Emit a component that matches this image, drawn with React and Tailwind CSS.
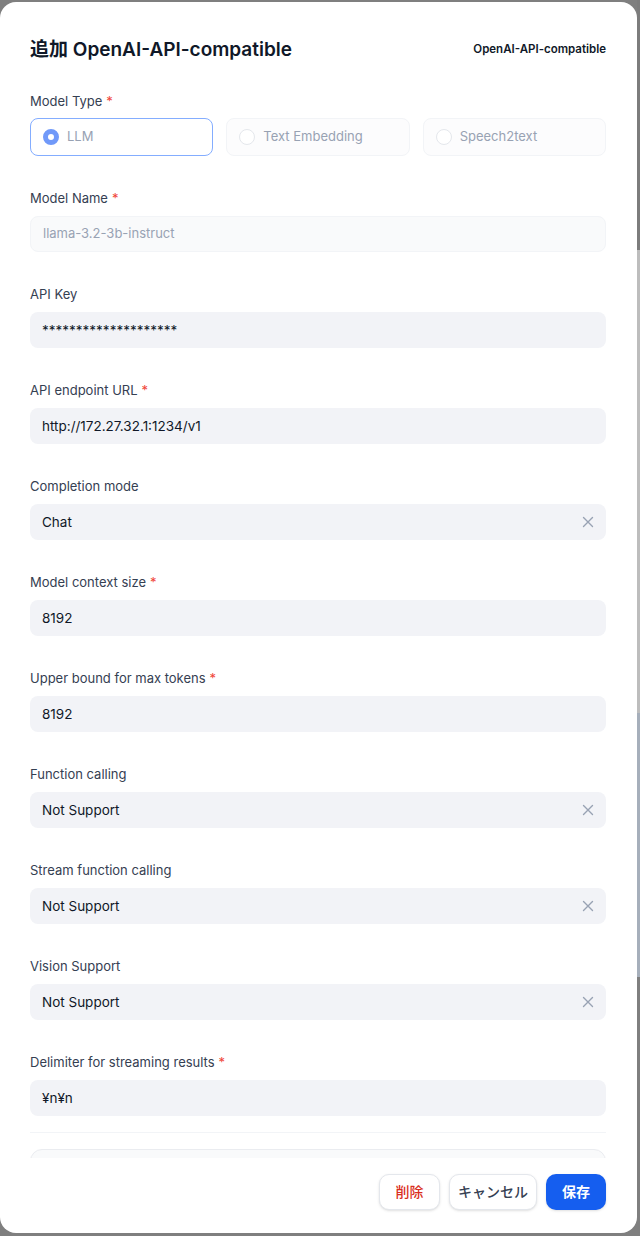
import React from "react";

const font = { fontFamily: 'Inter, "Noto Sans CJK JP", sans-serif' };

function Label({ text, required }) {
  return (
    <div className="h-5 text-[13px] leading-5 text-[#354052] flex items-center">
      <span>{text}</span>
      {required && <span className="ml-1 text-[#f04438]">*</span>}
    </div>
  );
}

function XIcon() {
  return (
    <svg width="12" height="12" viewBox="0 0 12 12" fill="none">
      <path d="M1.5 1.5L10.5 10.5M10.5 1.5L1.5 10.5" stroke="#98a2b3" strokeWidth="1.4" strokeLinecap="round" />
    </svg>
  );
}

function Field({ label, required, value, clear, disabled }) {
  return (
    <div className="flex flex-col gap-2">
      <Label text={label} required={required} />
      <div
        className={
          "h-9 rounded-lg flex items-center px-3 " +
          (disabled
            ? "bg-[#f9fafb] border border-[#f2f4f7] text-[#98a2b3] text-[13px]"
            : "bg-[#f2f3f7] text-[#101828] text-[13.5px]")
        }
      >
        <span className="flex-1">{value}</span>
        {clear && (
          <span className="flex items-center">
            <XIcon />
          </span>
        )}
      </div>
    </div>
  );
}

function Radio({ label, selected }) {
  return (
    <div
      className={
        "h-[38px] rounded-lg flex items-center px-3 gap-2 text-[13px] text-[#98a2b3] " +
        (selected ? "bg-white border border-[#84adff]" : "bg-[#fcfcfd] border border-[#f2f4f7]")
      }
    >
      {selected ? (
        <span className="w-4 h-4 rounded-full border-[5px] border-[#7099f9] bg-white" />
      ) : (
        <span className="w-4 h-4 rounded-full border border-[#e4e7ec] bg-white" />
      )}
      <span>{label}</span>
    </div>
  );
}

export default function App() {
  return (
    <div className="w-[640px] h-[1236px] bg-[#7f7f7f] flex overflow-hidden" style={font}>
      <div className="w-[637px] mt-[2px] h-[1231px] bg-white rounded-2xl flex flex-col">
        <div className="pl-[30px] pr-[31px] pt-[34px] flex items-center justify-between h-[61px]">
          <div className="text-[19px] leading-7 font-semibold text-[#101828]">追加 OpenAI-API-compatible</div>
          <div className="text-[11.5px] font-semibold text-[#101828]">OpenAI-API-compatible</div>
        </div>
        <div className="pl-[30px] pr-[31px] mt-[28px] h-[1067px] overflow-hidden flex flex-col">
          <div className="flex flex-col gap-[7px]">
            <Label text="Model Type" required />
            <div className="grid grid-cols-3 gap-[13px]">
              <Radio label="LLM" selected />
              <Radio label="Text Embedding" />
              <Radio label="Speech2text" />
            </div>
          </div>
          <div className="flex flex-col gap-8 mt-8">
            <Field label="Model Name" required value="llama-3.2-3b-instruct" disabled />
            <Field label="API Key" value="********************" />
            <Field label="API endpoint URL" required value="http://172.27.32.1:1234/v1" />
            <Field label="Completion mode" value="Chat" clear />
            <Field label="Model context size" required value="8192" />
            <Field label="Upper bound for max tokens" required value="8192" />
            <Field label="Function calling" value="Not Support" clear />
            <Field label="Stream function calling" value="Not Support" clear />
            <Field label="Vision Support" value="Not Support" clear />
            <Field label="Delimiter for streaming results" required value="¥n¥n" />
          </div>
          <div className="mt-4 h-px bg-[#f2f4f7] shrink-0" />
          <div className="mt-4 h-[60px] shrink-0 rounded-xl border border-[#eaecf0] bg-[#f9fafb]" />
        </div>
        <div className="pl-[30px] pr-[31px] mt-4 flex justify-end gap-[9px]">
          <button className="h-9 w-[61px] rounded-[10px] border border-[#e4e7ec] bg-white text-sm font-medium text-[#d92d20] shadow-sm">削除</button>
          <button className="h-9 w-[88px] rounded-[10px] border border-[#e4e7ec] bg-white text-sm font-medium text-[#354052] shadow-sm">キャンセル</button>
          <button className="h-9 w-[60px] rounded-[10px] bg-[#155eef] text-sm font-semibold text-white shadow-sm">保存</button>
        </div>
      </div>
      <div className="w-[3px] flex flex-col">
        <div className="h-[250px] bg-[#7c7c7c]" />
        <div className="h-[463px] bg-[#bdbdbd]" />
        <div className="h-[264px] bg-[#a6afbb]" />
        <div className="flex-1 bg-[#7f7f7f]" />
      </div>
    </div>
  );
}
